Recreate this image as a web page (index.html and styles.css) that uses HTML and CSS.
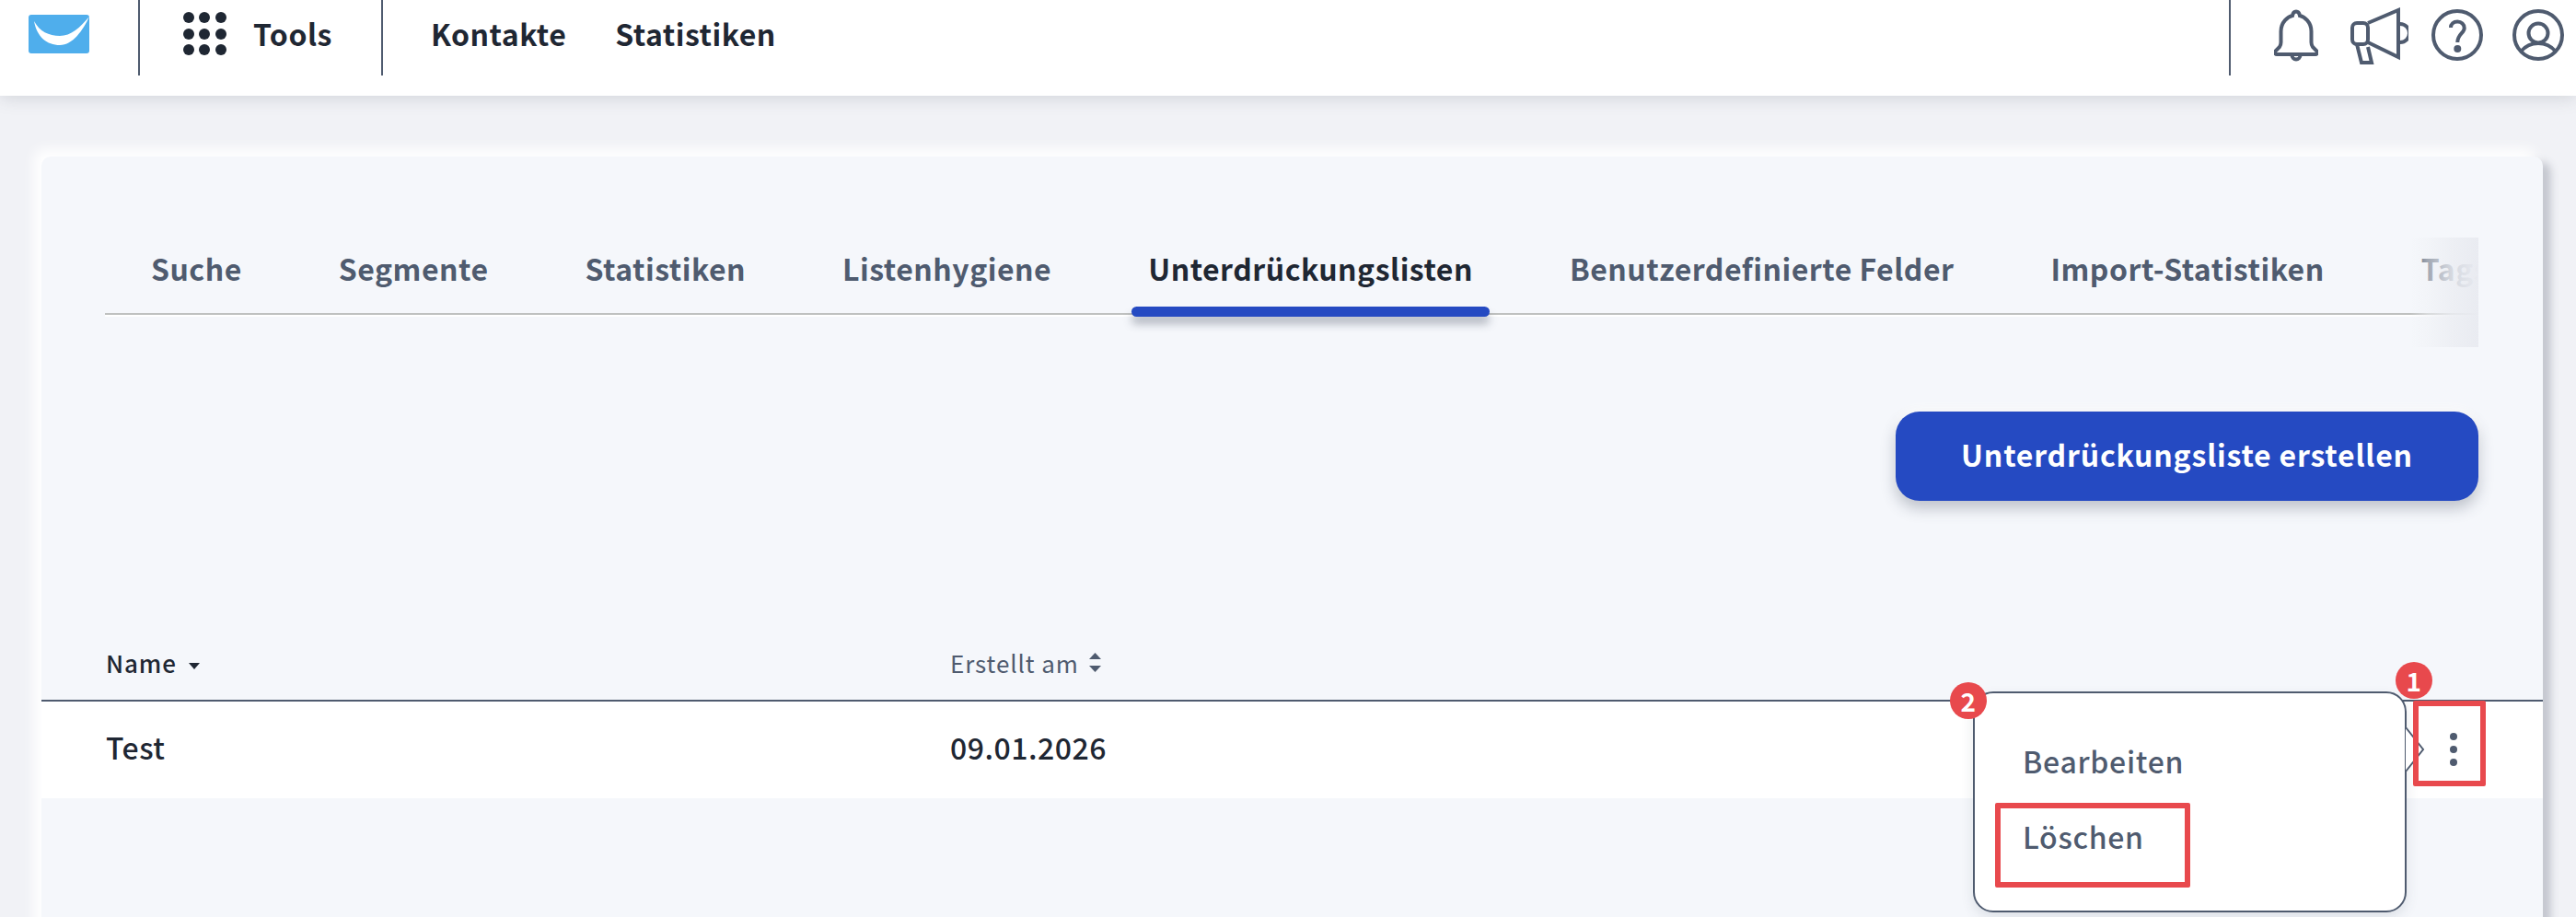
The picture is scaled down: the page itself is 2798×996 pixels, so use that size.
FILE: index.html
```html
<!DOCTYPE html>
<html lang="de">

<head>
    <meta charset="utf-8">
    <title>Unterdrückungslisten</title>
    <link rel="stylesheet" href="styles.css">
</head>

<body>
    <header class="topbar">
        <a class="logo">
            <svg width="66" height="42" viewBox="0 0 66 42">
                <rect width="66" height="42" rx="3" fill="#4faeec" />
                <path d="M6 7C9 24 20 33 34 33C48 33 59 17 66 2C56 14 46 23 34 23C22 23 12 18 6 7Z" fill="#fff" />
            </svg>
        </a>
        <div class="tools">
            <svg width="48" height="48" viewBox="0 0 48 48" fill="#1f2733">
                <circle cx="6" cy="6" r="6" /><circle cx="23" cy="6" r="6" /><circle cx="41" cy="6" r="6" />
                <circle cx="6" cy="24" r="6" /><circle cx="23" cy="24" r="6" /><circle cx="41" cy="24" r="6" />
                <circle cx="6" cy="41" r="6" /><circle cx="23" cy="41" r="6" /><circle cx="41" cy="41" r="6" />
            </svg>
            <span>Tools</span>
        </div>
        <nav class="mainnav">
            <a>Kontakte</a>
            <a>Statistiken</a>
        </nav>
        <div class="topicons">
            <svg class="bell" width="48" height="58" viewBox="0 0 48 58">
                <path d="M3 49H45C47 49 47.500 47 46.500 45.500L42 41C41 39.500 40.500 38 40.500 36V24C40.500 14 33 8 28 7C27.500 4 26 2.500 24 2.500S20.500 4 20 7C15 8 7.500 14 7.500 24V36C7.500 38 7 39.500 6 41L1.500 45.500C.5 47 1 49 3 49Z" />
                <path d="M19.500 50A4.500 4.500 0 0 0 28.500 50" />
            </svg>
            <svg class="mega" width="64" height="62" viewBox="0 0 64 62">
                <rect x="3" y="17" width="17" height="23" rx="5" />
                <path d="M20 17L53 3V54L20 38" />
                <path d="M55 18A10 10 0 0 1 55 38" />
                <path d="M8 40L13 60H24L20 43" />
            </svg>
            <svg class="help" width="56" height="56" viewBox="0 0 56 56">
                <circle cx="28" cy="28" r="26" />
                <path d="M21 20C21 16 24 13.500 28.300 13.500C32.500 13.500 35.700 16.500 35.700 20.500C35.700 26 28.300 27 28.300 36" />
                <circle class="fill" cx="28.300" cy="43" r="4" />
            </svg>
            <svg class="user" width="56" height="56" viewBox="0 0 56 56">
                <circle cx="28" cy="28" r="26" />
                <circle cx="28" cy="26" r="10.500" />
                <path d="M9 46C14 40 20 37 28 37S42 40 47 46" />
            </svg>
        </div>
    </header>

    <main class="card">
        <div class="tabs">
            <div class="tabrow">
                <a>Suche</a>
                <a>Segmente</a>
                <a>Statistiken</a>
                <a>Listenhygiene</a>
                <a class="active">Unterdrückungslisten</a>
                <a>Benutzerdefinierte Felder</a>
                <a>Import-Statistiken</a>
                <a>Tags</a>
            </div>
            <div class="fade"></div>
        </div>

        <div class="actions">
            <button>Unterdrückungsliste erstellen</button>
        </div>

        <section class="liste">
            <div class="kopf">
                <div class="sp-name">Name <i class="pfeil"></i></div>
                <div class="sp-datum">Erstellt am
                    <svg width="15" height="21" viewBox="0 0 15 21" fill="#4f5b6f">
                        <path d="M7.500 0L14 7H1Z" /><path d="M7.500 21L14 14H1Z" />
                    </svg>
                </div>
            </div>
            <div class="zeile">
                <div class="sp-name">Test</div>
                <div class="sp-datum">09.01.2026</div>
                <div class="punkte"><span></span><span></span><span></span></div>

                <div class="popup">
                    <a>Bearbeiten</a>
                    <a>Löschen</a>
                    <svg class="spitze" width="22" height="52" viewBox="0 0 22 52">
                        <path d="M1 2L20 26L1 50" />
                    </svg>
                </div>
                <div class="rahmen rahmen-punkte"></div>
                <div class="rahmen rahmen-loeschen"></div>
                <div class="marke marke-1">1</div>
                <div class="marke marke-2">2</div>
            </div>
        </section>
    </main>
</body>

</html>
```

FILE: styles.css
```css
html,
body {
    margin: 0;
    height: 996px;
    overflow: hidden;
}

body {
    background-color: #f1f2f6;
    font-family: "Noto Sans CJK SC", "Open Sans", sans-serif;
    color: #1f2733;
    letter-spacing: 0.5px;
}

/* topbar */
.topbar {
    display: flex;
    align-items: flex-start;
    height: 104px;
    background-color: #fff;
    box-shadow: 0 2px 18px rgba(60, 70, 90, 0.18);
}

.logo {
    width: 119px;
    height: 66px;
    padding: 16px 0 0 31px;
    border-right: 2px solid #4f5b6f;
}

.tools {
    display: flex;
    align-items: center;
    gap: 28px;
    width: 215px;
    height: 82px;
    padding-left: 47px;
    border-right: 2px solid #4f5b6f;
    font-size: 32px;
    font-weight: 700;
}

.tools svg {
    margin-top: -8px;
}

.tools span {
    margin-top: -10px;
}

.mainnav {
    display: flex;
    gap: 53px;
    height: 72px;
    align-items: center;
    padding-left: 52px;
    font-size: 32px;
    font-weight: 700;
}

.topicons {
    margin-left: auto;
    width: 375px;
    height: 82px;
    border-left: 2px solid #4f5b6f;
    position: relative;
}

.topicons svg {
    position: absolute;
    fill: none;
    stroke: #4f5b6f;
    stroke-width: 4;
}

.topicons .fill {
    fill: #4f5b6f;
    stroke: none;
}

.bell {
    left: 47px;
    top: 10px;
}

.mega {
    left: 129px;
    top: 8px;
}

.help {
    left: 218px;
    top: 10px;
}

.user {
    left: 306px;
    top: 10px;
}

/* card */
.card {
    margin: 66px 36px 0 45px;
    height: 900px;
    background-color: #f5f7fb;
    border-radius: 10px;
    box-shadow: -8px -8px 14px #fff, 8px 6px 10px rgba(60, 70, 90, 0.28);
}

.tabs {
    position: relative;
    height: 119px;
    margin: 0 70px 0 69px;
    top: 88px;
    overflow: hidden;
}

.tabrow {
    display: flex;
    gap: 69px;
    height: 82px;
    padding-left: 32px;
    border-bottom: 2px solid #bfc1c0;
    box-shadow: 0 2px 0 #fff;
    font-size: 32px;
    font-weight: 700;
    color: #4f5b6f;
    white-space: nowrap;
}

.tabrow a {
    position: relative;
    padding: 0 18px;
    line-height: 67px;
}

.tabrow .active {
    color: #1f2733;
}

.tabrow .active::after {
    content: "";
    position: absolute;
    left: 0;
    right: 0;
    bottom: -4px;
    height: 11px;
    border-radius: 6px;
    background-color: #254ac2;
    box-shadow: 0 8px 10px rgba(60, 70, 90, 0.35);
}

.fade {
    position: absolute;
    right: 0;
    top: 0;
    bottom: 0;
    width: 74px;
    background: linear-gradient(to right, rgba(245, 247, 251, 0), rgba(240, 242, 246, 0.5) 25%, rgba(236, 238, 243, 0.85) 60%, #e9ebf1);
}

.actions {
    display: flex;
    justify-content: flex-end;
    margin: 158px 70px 0 0;
}

.actions button {
    height: 97px;
    width: 633px;
    padding-bottom: 6px;
    border: none;
    border-radius: 26px;
    background-color: #254ac2;
    color: #fff;
    font-family: inherit;
    font-size: 32px;
    font-weight: 700;
    letter-spacing: 0.8px;
    box-shadow: 0 8px 16px rgba(60, 70, 90, 0.3), 0 -4px 10px #fff;
}

/* list */
.liste {
    margin-top: 157px;
}

.kopf,
.zeile {
    display: grid;
    grid-template-columns: 917px 1fr;
    padding-left: 70px;
    align-items: center;
}

.kopf {
    height: 35px;
    padding-bottom: 24px;
    border-bottom: 2px solid #4f5b6f;
    font-size: 26px;
    font-weight: 500;
    letter-spacing: 0.9px;
}

.kopf .sp-datum {
    display: flex;
    align-items: center;
    gap: 10px;
    color: #4f5b6f;
    font-weight: 400;
}

.pfeil {
    display: inline-block;
    margin-left: 6px;
    vertical-align: middle;
    border-left: 6px solid transparent;
    border-right: 6px solid transparent;
    border-top: 7px solid #1f2733;
}

.zeile {
    position: relative;
    height: 97px;
    padding-bottom: 8px;
    background-color: #fff;
    font-size: 32px;
    font-weight: 500;
}

.punkte {
    position: absolute;
    left: 2616px;
    top: 34px;
    display: grid;
    gap: 6px;
}

.punkte span {
    width: 8px;
    height: 8px;
    border-radius: 50%;
    background-color: #4f5b6f;
}

.popup {
    position: absolute;
    left: 2098px;
    top: -11px;
    width: 471px;
    height: 240px;
    box-sizing: border-box;
    padding: 50px 0 0 52px;
    display: grid;
    grid-auto-rows: 82px;
    background-color: #fff;
    border: 2px solid #4f5b6f;
    border-radius: 22px;
    box-shadow: 0 6px 14px rgba(60, 70, 90, 0.12);
    font-size: 32px;
    font-weight: 500;
    letter-spacing: 0.7px;
    color: #4f5b6f;
}

.spitze {
    position: absolute;
    right: -22px;
    top: 35px;
    fill: #fff;
    stroke: #4f5b6f;
    stroke-width: 2;
}

.rahmen {
    position: absolute;
    border: 6px solid #e8494d;
    box-sizing: border-box;
    border-radius: 2px;
}

.rahmen-punkte {
    left: 2576px;
    top: -1px;
    width: 79px;
    height: 93px;
}

.rahmen-loeschen {
    left: 2122px;
    top: 110px;
    width: 212px;
    height: 92px;
}

.marke {
    position: absolute;
    width: 40px;
    height: 40px;
    border-radius: 50%;
    background-color: #e8494d;
    color: #fff;
    text-align: center;
    font-size: 28px;
    font-weight: 700;
    line-height: 40px;
}

.marke-1 {
    left: 2557px;
    top: -43px;
}

.marke-2 {
    left: 2073px;
    top: -21px;
}
```
